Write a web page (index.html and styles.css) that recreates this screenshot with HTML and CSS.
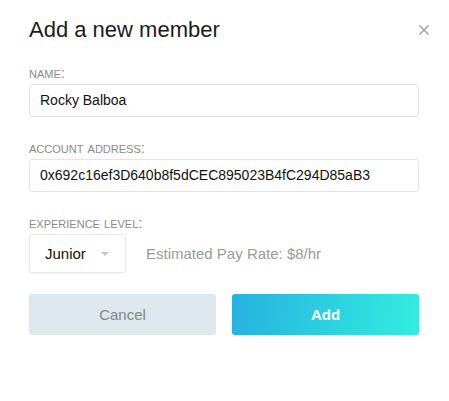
FILE: index.html
```html
<!DOCTYPE html>
<html lang="en">
<head>
<meta charset="utf-8">
<title>Add a new member</title>
<link rel="stylesheet" href="styles.css">
</head>
<body>
<div class="modal">
  <div class="modal-header">
    <h1 class="modal-title">Add a new member</h1>
    <button class="close" aria-label="Close">
      <svg width="10" height="10" viewBox="0 0 10 10"><path d="M0.5 0.5L9.5 9.5M9.5 0.5L0.5 9.5" stroke="#9a9a9a" stroke-width="1.3" fill="none"/></svg>
    </button>
  </div>
  <div class="fields">
    <div class="field">
      <label class="label">name:</label>
      <div class="input">Rocky Balboa</div>
    </div>
    <div class="field">
      <label class="label">account address:</label>
      <div class="input">0x692c16ef3D640b8f5dCEC895023B4fC294D85aB3</div>
    </div>
    <div class="field">
      <label class="label">experience level:</label>
      <div class="level-row">
        <div class="select">
          <span>Junior</span>
          <span class="caret"></span>
        </div>
        <span class="rate">Estimated Pay Rate: $8/hr</span>
      </div>
    </div>
  </div>
  <div class="actions">
    <button class="btn btn-cancel">Cancel</button>
    <button class="btn btn-add">Add</button>
  </div>
</div>
</body>
</html>
```
FILE: styles.css
```css
html, body {
  margin: 0;
  padding: 0;
  background: #ffffff;
}
body {
  font-family: "Liberation Sans", Arial, sans-serif;
  color: #1b1b1b;
}
.modal {
  width: 390px;
  padding: 14px 0 0 29px;
}
.modal-header {
  display: flex;
  justify-content: space-between;
  align-items: center;
  height: 32px;
}
.modal-title {
  margin: 0;
  font-size: 22px;
  font-weight: normal;
  line-height: 32px;
  color: #1b1b1b;
}
.close {
  border: 0;
  background: none;
  padding: 0;
  width: 10px;
  height: 10px;
  display: flex;
  margin-right: -10px;
}
.fields {
  display: flex;
  flex-direction: column;
  gap: 22px;
  margin-top: 18px;
}
.field {
  display: flex;
  flex-direction: column;
}
.label {
  font-variant: small-caps;
  font-size: 15px;
  color: #8a8a8a;
  line-height: 18px;
  margin-bottom: 2px;
}
.input {
  box-sizing: border-box;
  height: 33px;
  border: 1px solid #e3e3e3;
  border-radius: 3px;
  padding: 0 10px;
  font-size: 14px;
  line-height: 31px;
  color: #111;
}
.level-row {
  display: flex;
  align-items: center;
  gap: 20px;
}
.select {
  box-sizing: border-box;
  width: 97px;
  height: 39px;
  border: 1px solid #e8e8e8;
  border-radius: 3px;
  box-shadow: 0 1px 3px rgba(0,0,0,0.06);
  display: flex;
  align-items: center;
  justify-content: space-between;
  padding: 0 16px 0 15px;
  font-size: 15px;
  color: #111;
}
.caret {
  width: 0;
  height: 0;
  border-left: 4px solid transparent;
  border-right: 4px solid transparent;
  border-top: 4px solid #c4c4c4;
}
.rate {
  font-size: 15px;
  color: #9a9a9a;
}
.actions {
  display: flex;
  gap: 16px;
  margin-top: 21px;
}
.btn {
  flex: 1;
  height: 41px;
  border: 0;
  border-radius: 3px;
  font-family: "Liberation Sans", Arial, sans-serif;
  font-size: 15px;
}
.btn-cancel {
  background: #dce8ee;
  color: #858585;
}
.btn-add {
  background: linear-gradient(100deg, #26b1e0 0%, #32eedf 100%);
  color: #ffffff;
  font-weight: bold;
}
```
